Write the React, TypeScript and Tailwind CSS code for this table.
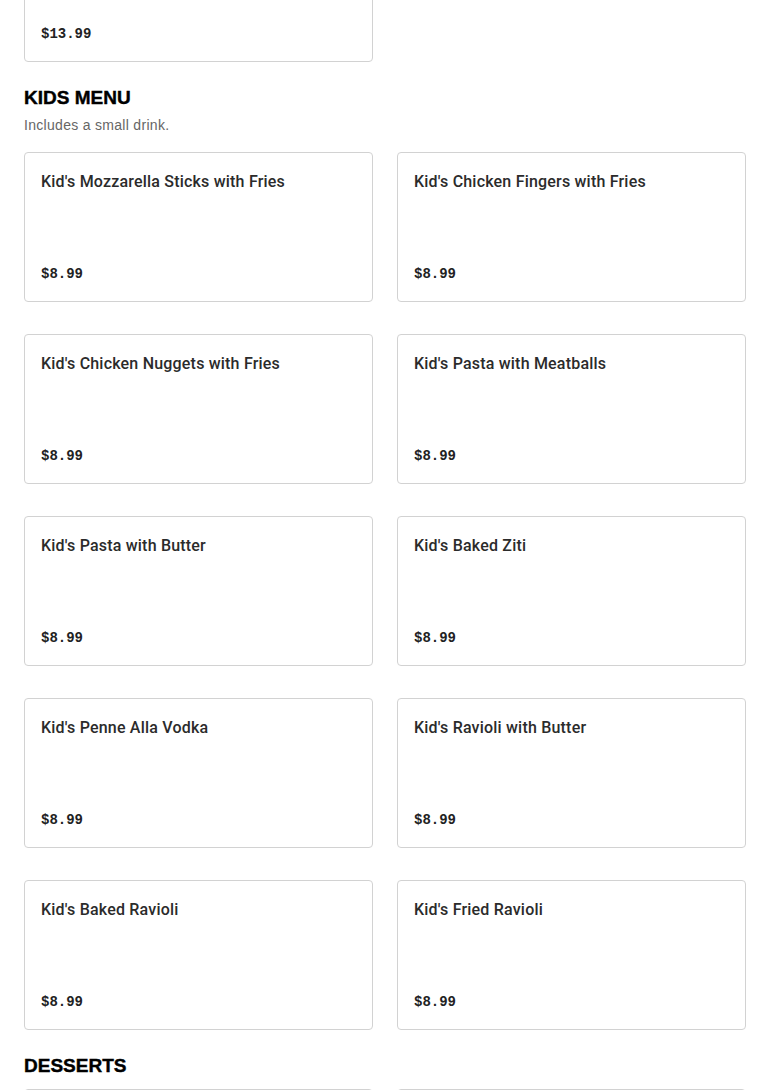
const kids = [
    "Kid's Mozzarella Sticks with Fries",
    "Kid's Chicken Fingers with Fries",
    "Kid's Chicken Nuggets with Fries",
    "Kid's Pasta with Meatballs",
    "Kid's Pasta with Butter",
    "Kid's Baked Ziti",
    "Kid's Penne Alla Vodka",
    "Kid's Ravioli with Butter",
    "Kid's Baked Ravioli",
    "Kid's Fried Ravioli",
]

const ItemCard = ({ name, price }: { name: string; price: string }) => (
    <div className="h-[150px] border border-[#d2d2d2] rounded bg-white px-4 pt-[17px] pb-[17px] flex flex-col justify-between">
        <div className="text-[16px] leading-6 font-medium tracking-[0.2px] text-[#2b2b2b] font-['Roboto',sans-serif]">{name}</div>
        <div className="text-[14px] leading-5 font-bold text-[#222] font-['Liberation_Mono',monospace]">{price}</div>
    </div>
)

const SectionHead = ({ title, note }: { title: string; note?: string }) => (
    <div className="mt-[22px]">
        <h2 className="text-[19px] leading-7 font-black text-black font-['Liberation_Sans',sans-serif] [-webkit-text-stroke:0.4px_black]">{title}</h2>
        {note && <p className="mt-[3px] text-[14px] leading-5 tracking-[0.3px] text-[#666] font-['Liberation_Sans',sans-serif]">{note}</p>}
    </div>
)

export default function App() {
    return (
        <div className="w-[770px] h-[1090px] overflow-hidden bg-white">
            <div className="px-6 -mt-[88px]">
                <div className="grid grid-cols-2 gap-x-6">
                    <ItemCard name="Kid's Special" price="$13.99" />
                </div>
                <SectionHead title="KIDS MENU" note="Includes a small drink." />
                <div className="mt-[17px] grid grid-cols-2 gap-x-6 gap-y-8">
                    {kids.map((k) => <ItemCard key={k} name={k} price="$8.99" />)}
                </div>
                <SectionHead title="DESSERTS" />
                <div className="mt-[9px] grid grid-cols-2 gap-x-6 gap-y-8">
                    <ItemCard name="Cannoli" price="$5.99" />
                    <ItemCard name="Tiramisu" price="$6.99" />
                </div>
            </div>
        </div>
    )
}
